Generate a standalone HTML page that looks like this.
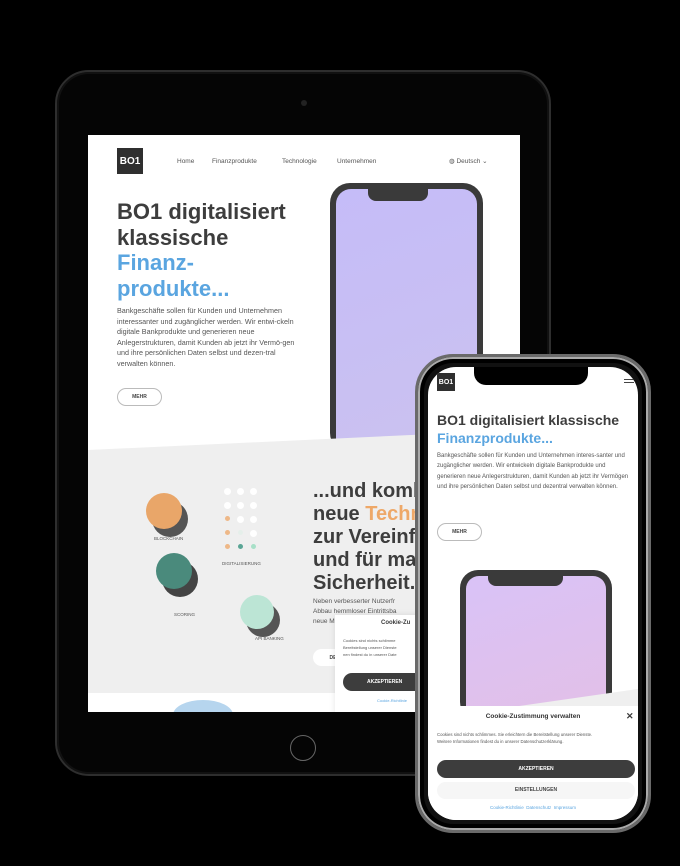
<!DOCTYPE html><html><head><meta charset="utf-8"><style>
*{margin:0;padding:0;box-sizing:border-box}
body{width:680px;height:866px;background:#000;position:relative;overflow:hidden;font-family:"Liberation Sans",sans-serif;color:#3a3a3a}
.a{position:absolute}
.tab{left:55px;top:70px;width:496px;height:706px;border-radius:34px;background:#050505;border:2px solid #2e2e2e;box-shadow:inset 0 0 0 2px #111}
.scr{left:88px;top:135px;width:432px;height:577px;background:#fff;overflow:hidden}
.logo{background:#2f2f2f;color:#fff;font-weight:bold;display:flex;align-items:center;justify-content:center}
.nav{font-size:6.5px;color:#555;top:158px}
h1{font-weight:bold;color:#3d3d3d}
.blue{color:#5aa5e0}
.orange{color:#eea868}
p{color:#555}
.btn{border:1px solid #bbb;border-radius:10px;font-size:5px;font-weight:bold;display:flex;align-items:center;justify-content:center;color:#444;background:#fff}
.dot{width:7px;height:7px;border-radius:50%;position:absolute}
</style></head><body>
<div class="a tab"></div>
<div class="a" style="left:301px;top:100px;width:6px;height:6px;border-radius:50%;background:#222"></div>
<div class="a" style="left:290px;top:735px;width:26px;height:26px;border-radius:50%;border:1.5px solid #666"></div>
<div class="a scr">
 <div class="a logo" style="left:29px;top:13px;width:26px;height:26px;font-size:10px">BO1</div>
 <div class="a nav" style="left:89px;top:23px">Home</div>
 <div class="a nav" style="left:124px;top:23px">Finanzprodukte</div>
 <div class="a nav" style="left:194px;top:23px">Technologie</div>
 <div class="a nav" style="left:249px;top:23px">Unternehmen</div>
 <div class="a nav" style="left:361px;top:22px">◍ Deutsch ⌄</div>
 <div class="a" style="left:242px;top:48px;width:153px;height:270px;background:#3a3a3a;border-radius:20px"></div>
 <div class="a" style="left:248px;top:54px;width:141px;height:270px;background:linear-gradient(160deg,#c5bcf8,#cbc2ef);border-radius:15px"></div>
 <div class="a" style="left:280px;top:52px;width:60px;height:14px;background:#3a3a3a;border-radius:0 0 8px 8px"></div>
 <h1 class="a" style="left:29px;top:64px;font-size:22px;line-height:25.5px">BO1 digitalisiert<br>klassische<br><span class="blue">Finanz-<br>produkte...</span></h1>
 <p class="a" style="left:29px;top:171px;font-size:7.2px;line-height:10.5px;width:190px">Bankgeschäfte sollen für Kunden und Unternehmen interessanter und zugänglicher werden. Wir entwi-ckeln digitale Bankprodukte und generieren neue Anlegerstrukturen, damit Kunden ab jetzt ihr Vermö-gen und ihre persönlichen Daten selbst und dezen-tral verwalten können.</p>
 <div class="a btn" style="left:29px;top:253px;width:45px;height:18px">MEHR</div>
 <div class="a" style="left:0;top:295px;width:432px;height:270px;background:#efefef;clip-path:polygon(0 20px,100% 0,100% 100%,0 100%)"></div>
 <div class="a" style="left:58px;top:358px;width:36px;height:36px;border-radius:50%;background:#e9a669;box-shadow:6px 8px 0 #555"></div>
 <div class="a" style="left:68px;top:418px;width:36px;height:36px;border-radius:50%;background:#4a8a7c;box-shadow:6px 8px 0 #444"></div>
 <div class="a" style="left:152px;top:460px;width:34px;height:34px;border-radius:50%;background:#bce5d5;box-shadow:6px 8px 0 #555"></div>
 <div class="a" style="left:66px;top:401px;font-size:4.5px;color:#555">BLOCKCHAIN</div>
 <div class="a" style="left:86px;top:477px;font-size:4.5px;color:#555">SCORING</div>
 <div class="a" style="left:167px;top:501px;font-size:4.5px;color:#555">API BANKING</div>
 <div class="a" style="left:134px;top:426px;font-size:4.5px;color:#555">DIGITALISIERUNG</div>
 <div class="dot" style="left:136px;top:353px;background:#fff"></div><div class="dot" style="left:149px;top:353px;background:#fff"></div><div class="dot" style="left:162px;top:353px;background:#fff"></div>
 <div class="dot" style="left:136px;top:367px;background:#fff"></div><div class="dot" style="left:149px;top:367px;background:#fff"></div><div class="dot" style="left:162px;top:367px;background:#fff"></div>
 <div class="dot" style="left:137px;top:381px;width:5px;height:5px;background:#eeb888"></div><div class="dot" style="left:149px;top:381px;background:#fff"></div><div class="dot" style="left:162px;top:381px;background:#fff"></div>
 <div class="dot" style="left:137px;top:395px;width:5px;height:5px;background:#eeb888"></div><div class="dot" style="left:150px;top:395px;width:5px;height:5px;background:#e5efea"></div><div class="dot" style="left:162px;top:395px;background:#fff"></div>
 <div class="dot" style="left:137px;top:409px;width:5px;height:5px;background:#eeb888"></div><div class="dot" style="left:150px;top:409px;width:5px;height:5px;background:#5aa595"></div><div class="dot" style="left:163px;top:409px;width:5px;height:5px;background:#a8e0c8"></div>
 <h1 class="a" style="left:225px;top:345px;font-size:20px;line-height:23px;white-space:nowrap">...und kombi<br>neue <span class="orange">Techn</span><br>zur Vereinfa<br>und für ma<br>Sicherheit.</h1>
 <p class="a" style="left:225px;top:462px;font-size:6.5px;line-height:10px;white-space:nowrap">Neben verbesserter Nutzerfr<br>Abbau hemmloser Eintrittsba<br>neue M</p>
 <div class="a btn" style="left:225px;top:514px;width:40px;height:17px;border:none">DE</div>
 <div class="a" style="left:0;top:558px;width:432px;height:20px;background:#fff"></div>
 <div class="a" style="left:85px;top:565px;width:60px;height:30px;border-radius:50%;background:#b6d5ee"></div>
 <div class="a" style="left:247px;top:480px;width:90px;height:100px;background:#fff;box-shadow:0 0 6px rgba(0,0,0,.1)"></div>
 <div class="a" style="left:293px;top:485px;font-size:6px;font-weight:bold">Cookie-Zu</div>
 <div class="a" style="left:255px;top:502px;font-size:4px;line-height:7px;color:#555">Cookies sind nichts schlimme<br>Bereitstellung unserer Dienste<br>nen findest du in unserer Date</div>
 <div class="a" style="left:255px;top:538px;width:90px;height:18px;border-radius:9px;background:#3d3d3d;color:#fff;font-size:5px;font-weight:bold;padding:6px 0 0 24px">AKZEPTIEREN</div>
 <div class="a" style="left:289px;top:563px;font-size:4px;color:#5aa5e0">Cookie-Richtlinie</div>
</div>
<!-- phone -->
<div class="a" style="left:415px;top:354px;width:236px;height:479px;border-radius:38px;background:#111;border:3px solid #6a6a6a;box-shadow:inset 0 0 0 2px #aaa,inset 0 0 0 6px #000"></div>
<div class="a" style="left:428px;top:367px;width:210px;height:453px;border-radius:28px;background:#fff;overflow:hidden">
 <div class="a" style="left:46px;top:0;width:114px;height:18px;background:#000;border-radius:0 0 12px 12px"></div>
 <div class="a logo" style="left:9px;top:6px;width:18px;height:18px;font-size:7px">BO1</div>
 <div class="a" style="left:196px;top:12px;width:10px;height:1px;background:#444;box-shadow:0 3px 0 #444"></div>
 <h1 class="a" style="left:9px;top:44px;font-size:14px;line-height:18px;white-space:nowrap">BO1 digitalisiert klassische<br><span class="blue">Finanzprodukte...</span></h1>
 <p class="a" style="left:9px;top:84px;font-size:6px;line-height:10.4px;width:196px">Bankgeschäfte sollen für Kunden und Unternehmen interes-santer und zugänglicher werden. Wir entwickeln digitale Bankprodukte und generieren neue Anlegerstrukturen, damit Kunden ab jetzt ihr Vermögen und ihre persönlichen Daten selbst und dezentral verwalten können.</p>
 <div class="a btn" style="left:9px;top:156px;width:45px;height:18px">MEHR</div>
 <div class="a" style="left:32px;top:203px;width:152px;height:150px;background:#3a3a3a;border-radius:18px"></div>
 <div class="a" style="left:38px;top:209px;width:140px;height:150px;background:linear-gradient(160deg,#d9c2f7,#e3c0e6);border-radius:13px"></div>
 <div class="a" style="left:60px;top:205px;width:75px;height:14px;background:#3a3a3a;border-radius:0 0 8px 8px"></div>
 <div class="a" style="left:0;top:322px;width:210px;height:30px;background:#efefef;clip-path:polygon(0 100%,100% 0,100% 100%)"></div>
 <div class="a" style="left:0;top:339px;width:210px;height:114px;background:#fff"></div>
 <div class="a" style="left:0;top:346px;width:210px;text-align:center;font-size:6.5px;font-weight:bold;color:#333">Cookie-Zustimmung verwalten</div>
 <div class="a" style="left:198px;top:344px;font-size:9px;font-weight:bold">✕</div>
 <div class="a" style="left:9px;top:364px;font-size:4.3px;line-height:7px;color:#555">Cookies sind nichts schlimmes. Sie erleichtern die Bereitstellung unserer Dienste.<br>Weitere Informationen findest du in unserer Datenschutzerklärung.</div>
 <div class="a" style="left:9px;top:393px;width:198px;height:18px;border-radius:9px;background:#3d3d3d;color:#fff;font-size:5px;font-weight:bold;text-align:center;line-height:18px">AKZEPTIEREN</div>
 <div class="a" style="left:9px;top:415px;width:198px;height:17px;border-radius:9px;background:#f6f6f6;color:#444;font-size:5px;font-weight:bold;text-align:center;line-height:17px">EINSTELLUNGEN</div>
 <div class="a" style="left:0;top:438px;width:210px;text-align:center;font-size:4.5px;color:#5aa5e0">Cookie-Richtlinie&nbsp; Datenschutz&nbsp; Impressum</div>
</div>
</body></html>
